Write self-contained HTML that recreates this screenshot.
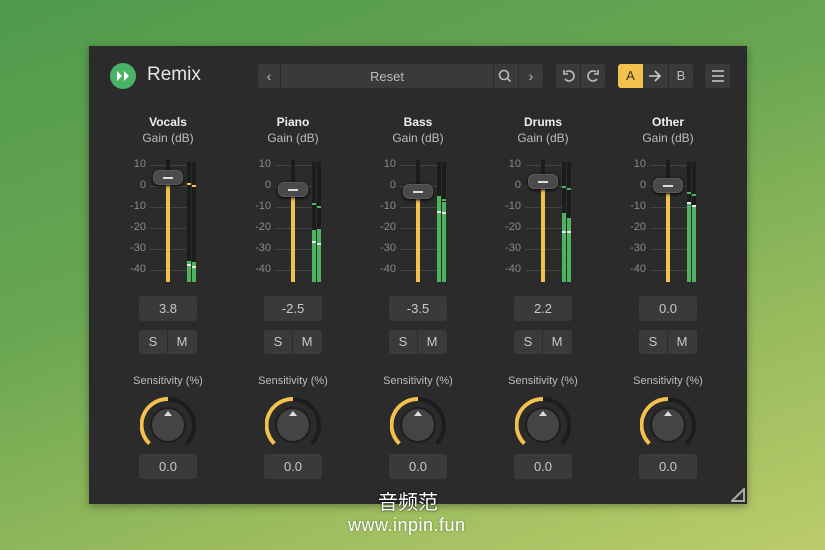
<!DOCTYPE html>
<html><head><meta charset="utf-8"><style>
*{margin:0;padding:0;box-sizing:border-box}
body{width:825px;height:550px;overflow:hidden;position:relative;font-family:"Liberation Sans","Noto Sans CJK SC",sans-serif;
background:linear-gradient(160deg,#4f9a4c 0%,#6aa652 40%,#9cbd5e 75%,#bccc6c 100%)}
.a{position:absolute}
#panel{left:89px;top:46px;width:658px;height:458px;background:#2b2b2b;box-shadow:0 2px 8px rgba(0,0,0,.35)}
.btn{position:absolute;background:#3a3a3a;border-radius:3px;color:#c8c8c8;font-size:13px;text-align:center}
.t{position:absolute;color:#8a8a8a;font-size:11px;text-align:right;width:30px}
.tick{position:absolute;height:1px;background:#444}
.lbl{position:absolute;width:120px;text-align:center;color:#d0d0d0;font-size:12px}
.bar{position:absolute;background:#1c1c1c;width:4px}
.g{position:absolute;background:#4cb45f;width:4px}
.pk{position:absolute;height:2px;width:4px}
.wm{position:absolute;height:2px;width:4px;background:#e8e8e8}
</style></head><body>
<div id="panel" class="a"></div>
<!-- header -->
<div class="a" style="left:110px;top:63px;width:26px;height:26px;border-radius:50%;background:#4bb366"></div>
<svg class="a" style="left:114px;top:70px" width="18" height="12"><path d="M3 1 L8 6 L3 11Z M10 1 L15 6 L10 11Z" fill="#fff"/></svg>
<div class="a" style="left:147px;top:64px;color:#e6e6e6;font-size:19px">Remix</div>
<div class="btn" style="left:258px;top:64px;width:285px;height:24px"></div>
<div class="a" style="left:280px;top:64px;width:1px;height:24px;background:#2b2b2b"></div>
<div class="a" style="left:493px;top:64px;width:1px;height:24px;background:#2b2b2b"></div>
<div class="a" style="left:518px;top:64px;width:1px;height:24px;background:#2b2b2b"></div>
<div class="a" style="left:258px;top:68px;width:22px;text-align:center;color:#bbb;font-size:14px">‹</div>
<div class="a" style="left:281px;top:69px;width:212px;text-align:center;color:#bbb;font-size:13px">Reset</div>
<svg class="a" style="left:498px;top:69px" width="14" height="14"><circle cx="6" cy="6" r="4.5" stroke="#bbb" stroke-width="1.6" fill="none"/><path d="M9 9 L12.5 12.5" stroke="#bbb" stroke-width="1.6"/></svg>
<div class="a" style="left:519px;top:68px;width:24px;text-align:center;color:#bbb;font-size:14px">›</div>
<div class="btn" style="left:556px;top:64px;width:49px;height:24px"></div>
<div class="a" style="left:580px;top:64px;width:1px;height:24px;background:#2b2b2b"></div>
<svg class="a" style="left:561px;top:68px" width="40" height="16"><path d="M5 4 A5 5 0 1 1 4 11" stroke="#bbb" stroke-width="1.6" fill="none"/><path d="M3 2 L3 6 L7 6" stroke="#bbb" stroke-width="1.6" fill="none"/><path d="M35 4 A5 5 0 1 0 36 11" stroke="#bbb" stroke-width="1.6" fill="none"/><path d="M37 2 L37 6 L33 6" stroke="#bbb" stroke-width="1.6" fill="none"/></svg>
<div class="btn" style="left:618px;top:64px;width:75px;height:24px"></div>
<div class="a" style="left:618px;top:64px;width:25px;height:24px;background:#f2c14e;border-radius:3px 0 0 3px;color:#3a3020;font-size:13px;text-align:center;line-height:24px">A</div>
<div class="a" style="left:668px;top:64px;width:1px;height:24px;background:#2b2b2b"></div>
<svg class="a" style="left:647px;top:69px" width="16" height="14"><path d="M2 7 H13 M8 2 L13 7 L8 12" stroke="#ccc" stroke-width="1.6" fill="none"/></svg>
<div class="a" style="left:669px;top:64px;width:24px;text-align:center;line-height:24px;color:#bbb;font-size:13px">B</div>
<div class="btn" style="left:705px;top:64px;width:25px;height:24px"></div>
<svg class="a" style="left:711px;top:69px" width="14" height="14"><path d="M1 2H13M1 7H13M1 12H13" stroke="#ccc" stroke-width="1.6"/></svg>

<!-- columns -->
<div id="cols"></div>
<script>
var names=["Vocals","Piano","Bass","Drums","Other"],vals=["3.8","-2.5","-3.5","2.2","0.0"],
hy=[177,189,191,181,185],
g=[[261,262],[230,229],[198,202],[213,218],[203,207]],
pk=[[183,185],[203,206],[196,199],[186,188],[192,194]],
wm=[[264,266],[241,243],[211,212],[231,231],[202,205]],
kv=[0.55,0.55,0.55,0.55,0.55];
var h="";
for(var i=0;i<5;i++){var c=168+125*i;
h+='<div class="lbl" style="left:'+(c-60)+'px;top:115px;font-weight:bold;color:#eee">'+names[i]+'</div>';
h+='<div class="lbl" style="left:'+(c-60)+'px;top:131px;color:#bdbdbd">Gain (dB)</div>';
var tk=["10","0","-10","-20","-30","-40"];
for(var j=0;j<6;j++){var y=165+21*j;h+='<div class="t" style="left:'+(c-52)+'px;top:'+(y-7)+'px">'+tk[j]+'</div><div class="tick" style="left:'+(c-18)+'px;top:'+y+'px;width:37px"></div>';}
h+='<div class="a" style="left:'+(c-2)+'px;top:160px;width:4px;height:122px;background:#1c1c1c"></div>';
h+='<div class="a" style="left:'+(c-2)+'px;top:'+hy[i]+'px;width:4px;height:'+(282-hy[i])+'px;background:#f2c14e"></div>';
h+='<div class="a" style="left:'+(c-15)+'px;top:'+(hy[i]-7)+'px;width:30px;height:15px;border-radius:6px;background:#4a4a4a;border:1px solid #5a5a5a;box-shadow:0 1px 3px #000"></div>';
h+='<div class="a" style="left:'+(c-5)+'px;top:'+hy[i]+'px;width:10px;height:2px;background:#ddd"></div>';
for(var k=0;k<2;k++){var x=c+19+k*5;
h+='<div class="bar" style="left:'+x+'px;top:162px;height:120px"></div>';
h+='<div class="g" style="left:'+x+'px;top:'+g[i][k]+'px;height:'+(282-g[i][k])+'px"></div>';
h+='<div class="pk" style="left:'+x+'px;top:'+pk[i][k]+'px;background:'+(i==0?'#f2c14e':'#4cb45f')+'"></div>';
h+='<div class="wm" style="left:'+x+'px;top:'+wm[i][k]+'px"></div>';}
h+='<div class="btn" style="left:'+(c-29)+'px;top:296px;width:58px;height:25px;line-height:25px">'+vals[i]+'</div>';
h+='<div class="btn" style="left:'+(c-29)+'px;top:330px;width:58px;height:24px;line-height:24px"><span style="display:inline-block;width:28px;border-right:1px solid #2b2b2b">S</span><span style="display:inline-block;width:29px">M</span></div>';
h+='<div class="lbl" style="left:'+(c-60)+'px;top:375px;font-size:11px;color:#bdbdbd">Sensitivity (%)</div>';
h+='<svg class="a" style="left:'+(c-28)+'px;top:397px" width="56" height="56"><path d="M9.4 46.6 A26 26 0 1 1 46.6 46.6" stroke="#1c1c1c" stroke-width="4" fill="none"/><path d="M9.4 46.6 A26 26 0 0 1 28 2" stroke="#f2c14e" stroke-width="4" fill="none"/><circle cx="28" cy="28" r="18" fill="#1e1e1e"/><circle cx="28" cy="28" r="16" fill="#444"/><path d="M24 19 L28 14 L32 19Z" fill="#ddd"/></svg>';
h+='<div class="btn" style="left:'+(c-29)+'px;top:454px;width:58px;height:25px;line-height:25px">0.0</div>';
}
document.getElementById("cols").innerHTML=h;
</script>
<svg class="a" style="left:731px;top:488px" width="14" height="14"><path d="M1 13 L13 1 L13 13Z" fill="none" stroke="#aaa" stroke-width="2"/></svg>
<div class="a" style="left:378px;top:486px;color:#fff;font-size:20px;font-family:'Noto Sans CJK SC',sans-serif;text-shadow:0 0 2px #000">音频范</div>
<div class="a" style="left:348px;top:515px;color:#fff;font-size:18px;letter-spacing:0.5px;text-shadow:0 0 2px rgba(0,0,0,.4)">www.inpin.fun</div>
</body></html>
